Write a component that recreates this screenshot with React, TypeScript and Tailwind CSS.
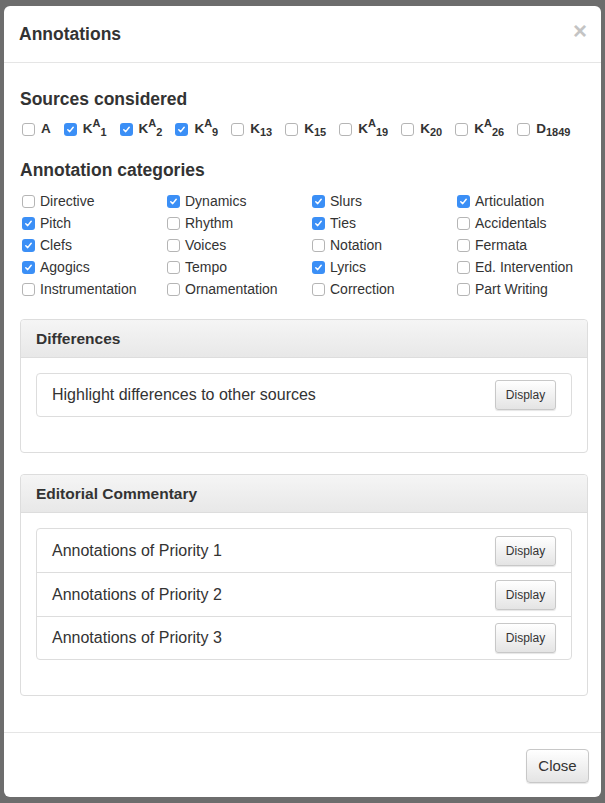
const sources: { base: string; sup?: string; sub?: string; checked: boolean }[] = [
  { base: "A", checked: false },
  { base: "K", sup: "A", sub: "1", checked: true },
  { base: "K", sup: "A", sub: "2", checked: true },
  { base: "K", sup: "A", sub: "9", checked: true },
  { base: "K", sub: "13", checked: false },
  { base: "K", sub: "15", checked: false },
  { base: "K", sup: "A", sub: "19", checked: false },
  { base: "K", sub: "20", checked: false },
  { base: "K", sup: "A", sub: "26", checked: false },
  { base: "D", sub: "1849", checked: false },
];

const categories: [string, boolean][] = [
  ["Directive", false], ["Dynamics", true], ["Slurs", true], ["Articulation", true],
  ["Pitch", true], ["Rhythm", false], ["Ties", true], ["Accidentals", false],
  ["Clefs", true], ["Voices", false], ["Notation", false], ["Fermata", false],
  ["Agogics", true], ["Tempo", false], ["Lyrics", true], ["Ed. Intervention", false],
  ["Instrumentation", false], ["Ornamentation", false], ["Correction", false], ["Part Writing", false],
];

function Box({ checked }: { checked: boolean }) {
  if (checked) {
    return (
      <span className="w-[13px] h-[13px] rounded-[3px] bg-[#3b8ff6] flex items-center justify-center shrink-0">
        <svg width="9" height="9" viewBox="0 0 9 9">
          <path d="M1.8 4.8 L3.7 6.6 L7.2 2.3" fill="none" stroke="white" strokeWidth="1.5" strokeLinecap="round" strokeLinejoin="round" />
        </svg>
      </span>
    );
  }
  return <span className="w-[13px] h-[13px] rounded-[3px] border border-[#b5b5b5] bg-white shrink-0" />;
}

function DisplayButton() {
  return (
    <button className="h-[30px] w-[61px] rounded-[3px] border border-[#c8c8c8] bg-gradient-to-b from-white to-[#e4e4e4] text-[12px] text-[#333] shadow-[0_1px_1px_rgba(0,0,0,0.1)]">
      Display
    </button>
  );
}

function Row({ label, last }: { label: string; last?: boolean }) {
  return (
    <div className={`flex items-center justify-between px-[15px] ${last ? "h-[42px]" : "h-[44px] border-b border-[#ddd]"}`}>
      <span className="text-[16px] text-[#333]">{label}</span>
      <DisplayButton />
    </div>
  );
}

function Panel({ title, rows, mb }: { title: string; rows: string[]; mb: string }) {
  return (
    <div className={`border border-[#ddd] rounded-[4px] ${mb}`}>
      <div className="h-[38px] flex items-center px-[15px] bg-gradient-to-b from-[#f5f5f5] to-[#e8e8e8] border-b border-[#ddd] rounded-t-[4px]">
        <span className="text-[15.5px] font-bold text-[#333]">{title}</span>
      </div>
      <div className="px-[15px] pt-[15px] pb-[35px]">
        <div className="border border-[#ddd] rounded-[4px]">
          {rows.map((r, i) => (
            <Row key={r} label={r} last={i === rows.length - 1} />
          ))}
        </div>
      </div>
    </div>
  );
}

export default function App() {
  return (
    <div className="w-[605px] h-[803px] bg-[#6d6d6d] pt-[6px] pl-[4px] overflow-hidden" style={{ fontFamily: '"Liberation Sans", Arial, sans-serif' }}>
      <div className="w-[597px] h-[791px] bg-white rounded-[6px] flex flex-col text-[#333]">
        <div className="h-[57px] flex items-center justify-between pl-[15px] pr-[14px] border-b border-[#e5e5e5] shrink-0">
          <h1 className="text-[17.5px] font-bold text-[#333]">Annotations</h1>
          <span className="text-[24px] leading-none font-bold text-[#c4c4c4] -mt-[6px]">×</span>
        </div>

        <div className="pl-[16px] pr-[13px] pt-[26px] flex-1">
          <h2 className="text-[17.5px] leading-[20px] font-bold">Sources considered</h2>
          <div className="flex items-center h-[18px] mt-[11px] pl-[2px]">
            {sources.map((s, i) => (
              <label key={i} className="flex items-center mr-[13px]">
                <Box checked={s.checked} />
                <span className="ml-[6px] text-[13.5px] font-bold leading-none">
                  {s.base}
                  {s.sup && <span className="text-[11px] relative -top-[6px]">{s.sup}</span>}
                  {s.sub && <span className="text-[11px] relative top-[3px]">{s.sub}</span>}
                </span>
              </label>
            ))}
          </div>

          <h2 className="text-[17.5px] leading-[20px] font-bold mt-[22px]">Annotation categories</h2>
          <div className="grid grid-cols-[145px_145px_145px_145px] mt-[10px] pl-[2px]">
            {categories.map(([label, checked]) => (
              <div key={label} className="h-[22px] flex items-center">
                <Box checked={checked} />
                <span className="ml-[5px] text-[14px]">{label}</span>
              </div>
            ))}
          </div>

          <div className="mt-[19px]">
            <Panel title="Differences" rows={["Highlight differences to other sources"]} mb="mb-[21px]" />
            <Panel
              title="Editorial Commentary"
              rows={["Annotations of Priority 1", "Annotations of Priority 2", "Annotations of Priority 3"]}
              mb="mb-[35px]"
            />
          </div>
        </div>

        <div className="border-t border-[#e5e5e5] flex justify-end pr-[12px] pt-[16px] pb-[14px] shrink-0">
          <button className="h-[34px] w-[63px] rounded-[4px] border border-[#c8c8c8] bg-gradient-to-b from-white to-[#e4e4e4] text-[15px] text-[#333] shadow-[0_1px_1px_rgba(0,0,0,0.1)]">
            Close
          </button>
        </div>
      </div>
    </div>
  );
}
